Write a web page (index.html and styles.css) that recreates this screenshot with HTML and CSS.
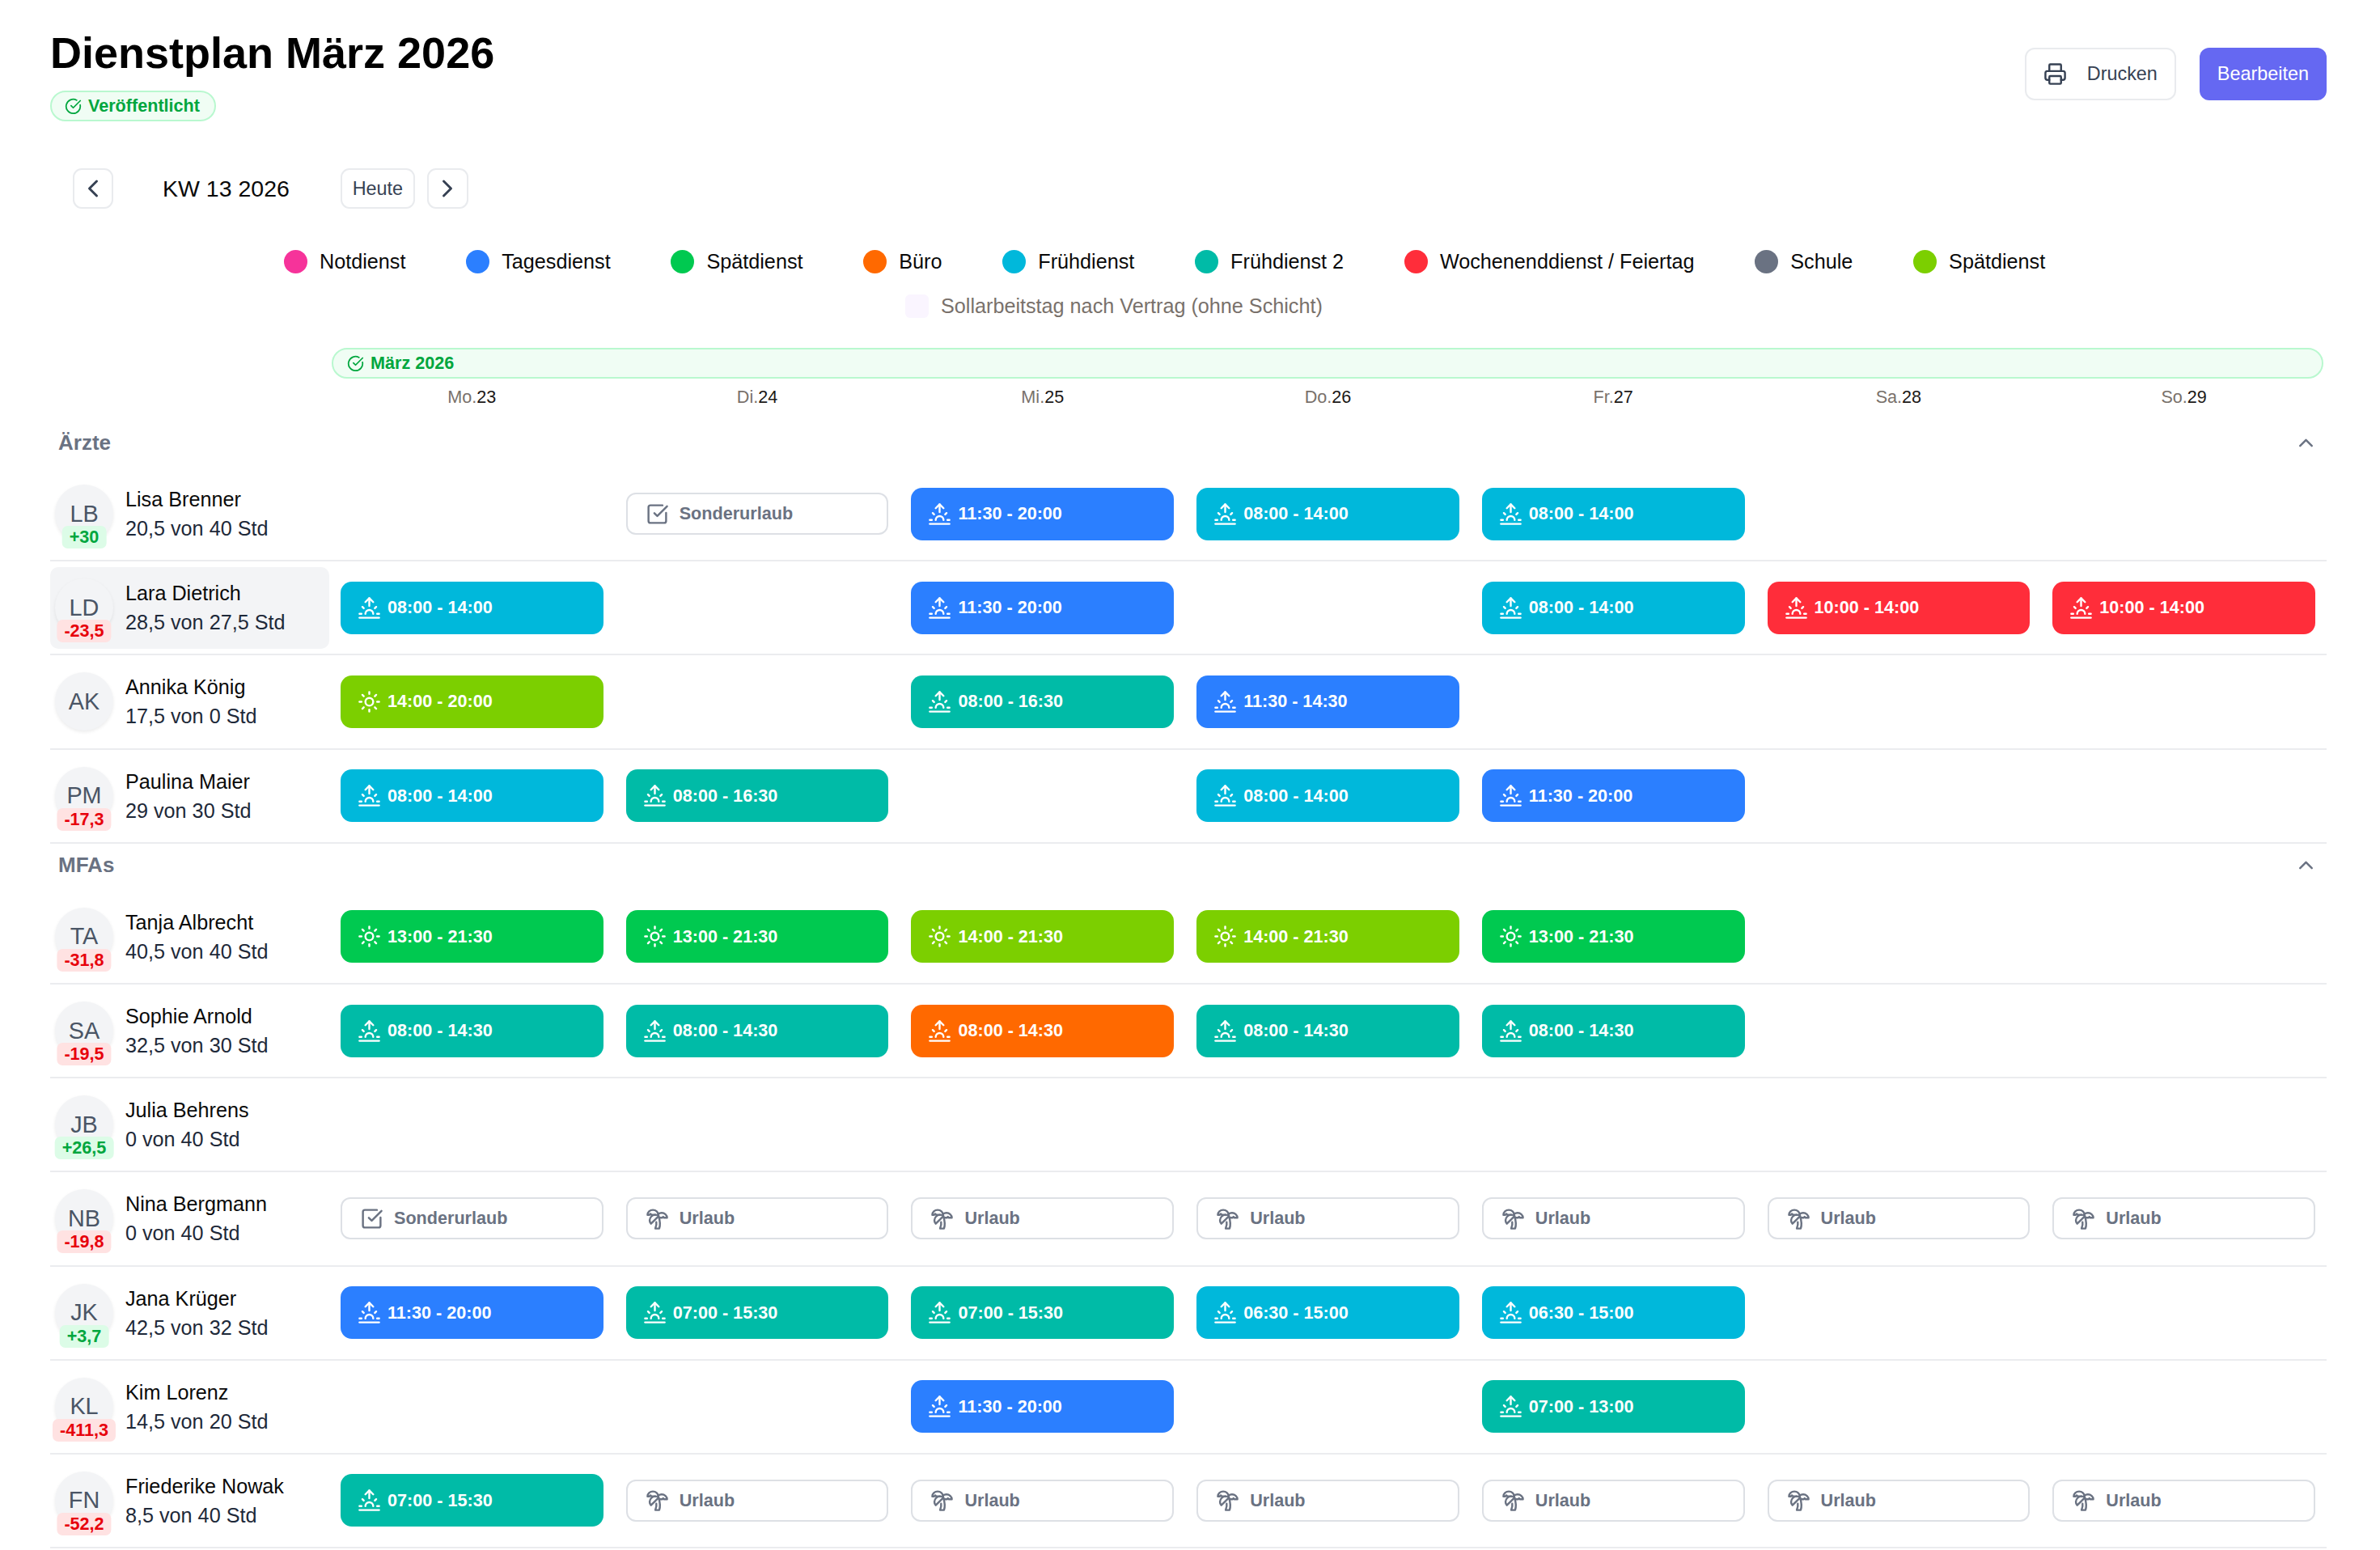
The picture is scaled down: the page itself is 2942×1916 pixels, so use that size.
FILE: index.html
```html
<!DOCTYPE html>
<html lang="de">
<head>
<meta charset="UTF-8">
<title>Dienstplan März 2026</title>
<link rel="stylesheet" href="styles.css">
</head>
<body>
<!-- icon sprite -->
<svg class="sprite" xmlns="http://www.w3.org/2000/svg">
    <symbol id="sunrise" viewBox="0 0 24 24"><path d="M12 2v8"/><path d="m4.93 10.93 1.41 1.41"/><path d="M2 18h2"/><path d="M20 18h2"/><path d="m19.07 10.93-1.41 1.41"/><path d="M22 22H2"/><path d="m8 6 4-4 4 4"/><path d="M16 18a4 4 0 0 0-8 0"/></symbol>
    <symbol id="sun" viewBox="0 0 24 24"><circle cx="12" cy="12" r="4"/><path d="M12 2v2"/><path d="M12 20v2"/><path d="m4.93 4.93 1.41 1.41"/><path d="m17.66 17.66 1.41 1.41"/><path d="M2 12h2"/><path d="M20 12h2"/><path d="m6.34 17.66-1.41 1.41"/><path d="m19.07 4.93-1.41 1.41"/></symbol>
    <symbol id="square-check" viewBox="0 0 24 24"><path d="M21 10.656V19a2 2 0 0 1-2 2H5a2 2 0 0 1-2-2V5a2 2 0 0 1 2-2h12.344"/><path d="m9 11 3 3L22 4"/></symbol>
    <symbol id="palm" viewBox="0 0 24 24"><path d="M13 8c0-2.76-2.46-5-5.5-5S2 5.24 2 8h2l1-1 1 1h4"/><path d="M13 7.14A5.82 5.82 0 0 1 16.5 6c3.04 0 5.5 2.24 5.5 5h-3l-1-1-1 1h-3"/><path d="M5.89 9.71c-2.15 2.15-2.3 5.47-.35 7.43l4.24-4.25.7-.7.71-.71 2.12-2.12c-1.95-1.96-5.27-1.8-7.42.35"/><path d="M11 15.5c.5 2.5-.17 4.5-1 6.5h4c2-5.5-.5-12-1-14"/></symbol>
    <symbol id="printer" viewBox="0 0 24 24"><path d="M6 18H4a2 2 0 0 1-2-2v-5a2 2 0 0 1 2-2h16a2 2 0 0 1 2 2v5a2 2 0 0 1-2 2h-2"/><path d="M6 9V3a1 1 0 0 1 1-1h10a1 1 0 0 1 1 1v6"/><rect x="6" y="14" width="12" height="8" rx="1"/></symbol>
    <symbol id="circle-check" viewBox="0 0 24 24"><path d="M21.801 10A10 10 0 1 1 17 3.335"/><path d="m9 11 3 3L22 4"/></symbol>
    <symbol id="chevron-left" viewBox="0 0 24 24"><path d="m15 18-6-6 6-6"/></symbol>
    <symbol id="chevron-right" viewBox="0 0 24 24"><path d="m9 18 6-6-6-6"/></symbol>
    <symbol id="chevron-up" viewBox="0 0 24 24"><path d="m18 15-6-6-6 6"/></symbol>
</svg>

<header class="page-header">
    <div>
        <h1>Dienstplan März 2026</h1>
        <span class="status-badge"><svg class="ico-check"><use href="#circle-check"/></svg>Veröffentlicht</span>
    </div>
    <div class="header-actions">
        <button class="btn btn-print"><svg class="ico-print"><use href="#printer"/></svg>Drucken</button>
        <button class="btn btn-primary">Bearbeiten</button>
    </div>
</header>

<nav class="week-nav">
    <button class="nav-btn"><svg class="ico-nav"><use href="#chevron-left"/></svg></button>
    <span class="week-label">KW 13 2026</span>
    <button class="nav-btn nav-today">Heute</button>
    <button class="nav-btn nav-next"><svg class="ico-nav"><use href="#chevron-right"/></svg></button>
</nav>

<div class="legend">
    <div class="legend-row">
        <span class="legend-item"><i class="dot pink"></i>Notdienst</span>
        <span class="legend-item"><i class="dot blue"></i>Tagesdienst</span>
        <span class="legend-item"><i class="dot green"></i>Spätdienst</span>
        <span class="legend-item"><i class="dot orange"></i>Büro</span>
        <span class="legend-item"><i class="dot cyan"></i>Frühdienst</span>
        <span class="legend-item"><i class="dot teal"></i>Frühdienst 2</span>
        <span class="legend-item"><i class="dot red"></i>Wochenenddienst / Feiertag</span>
        <span class="legend-item"><i class="dot gray"></i>Schule</span>
        <span class="legend-item"><i class="dot lime"></i>Spätdienst</span>
    </div>
    <div class="legend-row legend-row-note">
        <span class="legend-item legend-note"><i class="swatch"></i>Sollarbeitstag nach Vertrag (ohne Schicht)</span>
    </div>
</div>

<div class="month-bar"><svg class="ico-check"><use href="#circle-check"/></svg>März 2026</div>

<div class="day-head">
    <div></div>
    <div class="day"><span>Mo.</span>23</div>
    <div class="day"><span>Di.</span>24</div>
    <div class="day"><span>Mi.</span>25</div>
    <div class="day"><span>Do.</span>26</div>
    <div class="day"><span>Fr.</span>27</div>
    <div class="day"><span>Sa.</span>28</div>
    <div class="day"><span>So.</span>29</div>
</div>

<div class="group-head"><span>Ärzte</span><svg class="ico-group"><use href="#chevron-up"/></svg></div>

<div class="row">
    <div class="person">
        <div class="avatar">LB<span class="saldo plus">+30</span></div>
        <div class="person-text"><div class="name">Lisa Brenner</div><div>20,5 von 40 Std</div></div>
    </div>
    <div class="cell"></div>
    <div class="cell"><div class="absence"><svg><use href="#square-check"/></svg>Sonderurlaub</div></div>
    <div class="cell"><div class="shift blue"><svg><use href="#sunrise"/></svg>11:30 - 20:00</div></div>
    <div class="cell"><div class="shift cyan"><svg><use href="#sunrise"/></svg>08:00 - 14:00</div></div>
    <div class="cell"><div class="shift cyan"><svg><use href="#sunrise"/></svg>08:00 - 14:00</div></div>
    <div class="cell"></div>
    <div class="cell"></div>
</div>

<div class="row">
    <div class="person active">
        <div class="avatar">LD<span class="saldo minus">-23,5</span></div>
        <div class="person-text"><div class="name">Lara Dietrich</div><div>28,5 von 27,5 Std</div></div>
    </div>
    <div class="cell"><div class="shift cyan"><svg><use href="#sunrise"/></svg>08:00 - 14:00</div></div>
    <div class="cell"></div>
    <div class="cell"><div class="shift blue"><svg><use href="#sunrise"/></svg>11:30 - 20:00</div></div>
    <div class="cell"></div>
    <div class="cell"><div class="shift cyan"><svg><use href="#sunrise"/></svg>08:00 - 14:00</div></div>
    <div class="cell"><div class="shift red"><svg><use href="#sunrise"/></svg>10:00 - 14:00</div></div>
    <div class="cell"><div class="shift red"><svg><use href="#sunrise"/></svg>10:00 - 14:00</div></div>
</div>

<div class="row">
    <div class="person">
        <div class="avatar">AK</div>
        <div class="person-text"><div class="name">Annika König</div><div>17,5 von 0 Std</div></div>
    </div>
    <div class="cell"><div class="shift lime"><svg><use href="#sun"/></svg>14:00 - 20:00</div></div>
    <div class="cell"></div>
    <div class="cell"><div class="shift teal"><svg><use href="#sunrise"/></svg>08:00 - 16:30</div></div>
    <div class="cell"><div class="shift blue"><svg><use href="#sunrise"/></svg>11:30 - 14:30</div></div>
    <div class="cell"></div>
    <div class="cell"></div>
    <div class="cell"></div>
</div>

<div class="row">
    <div class="person">
        <div class="avatar">PM<span class="saldo minus">-17,3</span></div>
        <div class="person-text"><div class="name">Paulina Maier</div><div>29 von 30 Std</div></div>
    </div>
    <div class="cell"><div class="shift cyan"><svg><use href="#sunrise"/></svg>08:00 - 14:00</div></div>
    <div class="cell"><div class="shift teal"><svg><use href="#sunrise"/></svg>08:00 - 16:30</div></div>
    <div class="cell"></div>
    <div class="cell"><div class="shift cyan"><svg><use href="#sunrise"/></svg>08:00 - 14:00</div></div>
    <div class="cell"><div class="shift blue"><svg><use href="#sunrise"/></svg>11:30 - 20:00</div></div>
    <div class="cell"></div>
    <div class="cell"></div>
</div>

<div class="group-head"><span>MFAs</span><svg class="ico-group"><use href="#chevron-up"/></svg></div>

<div class="row">
    <div class="person">
        <div class="avatar">TA<span class="saldo minus">-31,8</span></div>
        <div class="person-text"><div class="name">Tanja Albrecht</div><div>40,5 von 40 Std</div></div>
    </div>
    <div class="cell"><div class="shift green"><svg><use href="#sun"/></svg>13:00 - 21:30</div></div>
    <div class="cell"><div class="shift green"><svg><use href="#sun"/></svg>13:00 - 21:30</div></div>
    <div class="cell"><div class="shift lime"><svg><use href="#sun"/></svg>14:00 - 21:30</div></div>
    <div class="cell"><div class="shift lime"><svg><use href="#sun"/></svg>14:00 - 21:30</div></div>
    <div class="cell"><div class="shift green"><svg><use href="#sun"/></svg>13:00 - 21:30</div></div>
    <div class="cell"></div>
    <div class="cell"></div>
</div>

<div class="row">
    <div class="person">
        <div class="avatar">SA<span class="saldo minus">-19,5</span></div>
        <div class="person-text"><div class="name">Sophie Arnold</div><div>32,5 von 30 Std</div></div>
    </div>
    <div class="cell"><div class="shift teal"><svg><use href="#sunrise"/></svg>08:00 - 14:30</div></div>
    <div class="cell"><div class="shift teal"><svg><use href="#sunrise"/></svg>08:00 - 14:30</div></div>
    <div class="cell"><div class="shift orange"><svg><use href="#sunrise"/></svg>08:00 - 14:30</div></div>
    <div class="cell"><div class="shift teal"><svg><use href="#sunrise"/></svg>08:00 - 14:30</div></div>
    <div class="cell"><div class="shift teal"><svg><use href="#sunrise"/></svg>08:00 - 14:30</div></div>
    <div class="cell"></div>
    <div class="cell"></div>
</div>

<div class="row">
    <div class="person">
        <div class="avatar">JB<span class="saldo plus">+26,5</span></div>
        <div class="person-text"><div class="name">Julia Behrens</div><div>0 von 40 Std</div></div>
    </div>
    <div class="cell"></div>
    <div class="cell"></div>
    <div class="cell"></div>
    <div class="cell"></div>
    <div class="cell"></div>
    <div class="cell"></div>
    <div class="cell"></div>
</div>

<div class="row">
    <div class="person">
        <div class="avatar">NB<span class="saldo minus">-19,8</span></div>
        <div class="person-text"><div class="name">Nina Bergmann</div><div>0 von 40 Std</div></div>
    </div>
    <div class="cell"><div class="absence"><svg><use href="#square-check"/></svg>Sonderurlaub</div></div>
    <div class="cell"><div class="absence"><svg><use href="#palm"/></svg>Urlaub</div></div>
    <div class="cell"><div class="absence"><svg><use href="#palm"/></svg>Urlaub</div></div>
    <div class="cell"><div class="absence"><svg><use href="#palm"/></svg>Urlaub</div></div>
    <div class="cell"><div class="absence"><svg><use href="#palm"/></svg>Urlaub</div></div>
    <div class="cell"><div class="absence"><svg><use href="#palm"/></svg>Urlaub</div></div>
    <div class="cell"><div class="absence"><svg><use href="#palm"/></svg>Urlaub</div></div>
</div>

<div class="row">
    <div class="person">
        <div class="avatar">JK<span class="saldo plus">+3,7</span></div>
        <div class="person-text"><div class="name">Jana Krüger</div><div>42,5 von 32 Std</div></div>
    </div>
    <div class="cell"><div class="shift blue"><svg><use href="#sunrise"/></svg>11:30 - 20:00</div></div>
    <div class="cell"><div class="shift teal"><svg><use href="#sunrise"/></svg>07:00 - 15:30</div></div>
    <div class="cell"><div class="shift teal"><svg><use href="#sunrise"/></svg>07:00 - 15:30</div></div>
    <div class="cell"><div class="shift cyan"><svg><use href="#sunrise"/></svg>06:30 - 15:00</div></div>
    <div class="cell"><div class="shift cyan"><svg><use href="#sunrise"/></svg>06:30 - 15:00</div></div>
    <div class="cell"></div>
    <div class="cell"></div>
</div>

<div class="row">
    <div class="person">
        <div class="avatar">KL<span class="saldo minus">-411,3</span></div>
        <div class="person-text"><div class="name">Kim Lorenz</div><div>14,5 von 20 Std</div></div>
    </div>
    <div class="cell"></div>
    <div class="cell"></div>
    <div class="cell"><div class="shift blue"><svg><use href="#sunrise"/></svg>11:30 - 20:00</div></div>
    <div class="cell"></div>
    <div class="cell"><div class="shift teal"><svg><use href="#sunrise"/></svg>07:00 - 13:00</div></div>
    <div class="cell"></div>
    <div class="cell"></div>
</div>

<div class="row">
    <div class="person">
        <div class="avatar">FN<span class="saldo minus">-52,2</span></div>
        <div class="person-text"><div class="name">Friederike Nowak</div><div>8,5 von 40 Std</div></div>
    </div>
    <div class="cell"><div class="shift teal"><svg><use href="#sunrise"/></svg>07:00 - 15:30</div></div>
    <div class="cell"><div class="absence"><svg><use href="#palm"/></svg>Urlaub</div></div>
    <div class="cell"><div class="absence"><svg><use href="#palm"/></svg>Urlaub</div></div>
    <div class="cell"><div class="absence"><svg><use href="#palm"/></svg>Urlaub</div></div>
    <div class="cell"><div class="absence"><svg><use href="#palm"/></svg>Urlaub</div></div>
    <div class="cell"><div class="absence"><svg><use href="#palm"/></svg>Urlaub</div></div>
    <div class="cell"><div class="absence"><svg><use href="#palm"/></svg>Urlaub</div></div>
</div>
</body>
</html>
```

FILE: styles.css
```css
* {
    box-sizing: border-box;
}

body {
    font-family: "Liberation Sans", Arial, sans-serif;
    background-color: #fff;
    color: #0a0a0a;
    margin: 0;
    padding: 32px 66px 0 62px;
}

svg {
    fill: none;
    stroke: currentColor;
    stroke-width: 2;
    stroke-linecap: round;
    stroke-linejoin: round;
    flex-shrink: 0;
}

.sprite {
    display: none;
}

/* Page header */
.page-header {
    display: flex;
    justify-content: space-between;
    align-items: center;
}

h1 {
    font-size: 54px;
    line-height: 65px;
    font-weight: 700;
    margin: 1px 0 14px;
    color: #000;
}

.status-badge {
    display: inline-flex;
    align-items: center;
    gap: 8px;
    height: 38px;
    padding: 0 18px 0 16px;
    font-size: 21.6px;
    font-weight: 700;
    color: #00a63e;
    background-color: #f0fdf4;
    border: 2px solid #b9f8cf;
    border-radius: 19px;
}

.ico-check {
    width: 21px;
    height: 21px;
}

.header-actions {
    display: flex;
    gap: 29px;
}

.btn {
    display: flex;
    align-items: center;
    height: 65px;
    padding: 0 21px;
    font-family: inherit;
    font-size: 23.4px;
    border-radius: 12px;
}

.btn-print {
    gap: 25px;
    color: #364153;
    background-color: #fff;
    border: 2px solid #e9ebee;
}

.ico-print {
    width: 29px;
    height: 29px;
}

.btn-primary {
    padding: 0 22px;
    color: #fff;
    background-color: #6568f2;
    border: none;
}

/* Week navigation */
.week-nav {
    display: flex;
    align-items: center;
    margin-top: 36px;
    padding: 22px 0 0 28px;
    height: 72px;
}

.nav-btn {
    display: flex;
    align-items: center;
    justify-content: center;
    width: 50px;
    height: 50px;
    padding: 0;
    font-family: inherit;
    font-size: 23.4px;
    color: #364153;
    background-color: #fff;
    border: 2px solid #e9ebee;
    border-radius: 11px;
}

.nav-today {
    width: 92px;
    margin-right: 15px;
}

.nav-next {
    width: 51px;
}

.ico-nav {
    width: 36px;
    height: 36px;
}

.week-label {
    font-size: 28.5px;
    margin: 0 63px 0 61px;
}

/* Legend */
.legend {
    margin-top: 47px;
    display: flex;
    flex-direction: column;
    gap: 19px;
}

.legend-row {
    display: flex;
    height: 36px;
    gap: 74.8px;
    padding-left: 289px;
}

.legend-row-note {
    padding-left: 1057px;
}

.legend-item {
    display: flex;
    align-items: center;
    gap: 15px;
    font-size: 25.2px;
    white-space: nowrap;
}

.legend-note {
    color: #79716b;
}

.dot {
    width: 29px;
    height: 29px;
    border-radius: 50%;
}

.swatch {
    width: 29px;
    height: 29px;
    border-radius: 6px;
    background-color: #faf5ff;
}

.dot.pink { background-color: #f6339a; }
.dot.blue { background-color: #2b7fff; }
.dot.green { background-color: #00c950; }
.dot.orange { background-color: #ff6900; }
.dot.cyan { background-color: #00b8db; }
.dot.teal { background-color: #00bba7; }
.dot.red { background-color: #ff2d3a; }
.dot.gray { background-color: #6a7282; }
.dot.lime { background-color: #7ccf00; }

/* Month bar and day labels */
.month-bar {
    display: flex;
    align-items: center;
    gap: 8px;
    height: 38px;
    margin: 34px 4px 0 348px;
    padding-left: 17px;
    font-size: 21.6px;
    font-weight: 700;
    color: #00a63e;
    background-color: #f0fdf4;
    border: 2px solid #b9f8cf;
    border-radius: 19px;
}

.day-head,
.row {
    display: grid;
    grid-template-columns: 345px repeat(7, 1fr);
}

.day-head {
    margin-top: 7px;
    height: 32px;
    margin-bottom: 13px;
}

.day {
    text-align: center;
    font-size: 21.6px;
    line-height: 32px;
    color: #1c1917;
}

.day span {
    color: #79716b;
}

/* Employee groups */
.group-head {
    display: flex;
    justify-content: space-between;
    align-items: center;
    height: 58px;
    padding: 0 11px 4px 10px;
    font-size: 26px;
    font-weight: 700;
    color: #6a7282;
}

.ico-group {
    width: 29px;
    height: 29px;
}

.row {
    height: 116.2px;
    border-bottom: 2px solid #ebecef;
    align-items: center;
}

.person {
    display: flex;
    align-items: center;
    gap: 15px;
    height: 101px;
    padding-left: 6px;
    border-radius: 10px;
}

.person.active {
    background-color: #f3f4f6;
}

.person-text {
    font-size: 25.2px;
    line-height: 36px;
    color: #1e2939;
}

.person-text .name {
    color: #0a0a0a;
}

.avatar {
    position: relative;
    display: flex;
    align-items: center;
    justify-content: center;
    width: 72px;
    height: 72px;
    font-size: 28.8px;
    color: #4a5565;
    background-color: #f3f4f6;
    border-radius: 50%;
    box-shadow: 0 2px 4px rgba(0, 0, 0, 0.08);
}

.saldo {
    position: absolute;
    bottom: -7px;
    left: 50%;
    transform: translateX(-50%);
    height: 28px;
    padding: 0 9px;
    font-size: 21.6px;
    font-weight: 700;
    line-height: 28px;
    white-space: nowrap;
    border-radius: 7px;
}

.saldo.plus {
    color: #00a63e;
    background-color: #dcfce7;
}

.saldo.minus {
    color: #e7000b;
    background-color: #ffe2e2;
}

/* Shift cards */
.cell {
    padding: 0 14px;
}

.shift {
    display: flex;
    align-items: center;
    gap: 8px;
    height: 65px;
    padding-left: 21px;
    font-size: 21.6px;
    font-weight: 700;
    color: #fff;
    border-radius: 14px;
}

.shift svg {
    width: 29px;
    height: 29px;
}

.shift.blue { background-color: #2b7fff; }
.shift.green { background-color: #00c950; }
.shift.orange { background-color: #ff6900; }
.shift.cyan { background-color: #00b8db; }
.shift.teal { background-color: #00bba7; }
.shift.red { background-color: #ff2d3a; }
.shift.lime { background-color: #7ccf00; }

.absence {
    display: flex;
    align-items: center;
    gap: 13px;
    height: 52px;
    padding-left: 22px;
    font-size: 21.6px;
    font-weight: 700;
    color: #6a7282;
    background-color: #fff;
    border: 2px solid #dde0e5;
    border-radius: 12px;
}

.absence svg {
    width: 29px;
    height: 29px;
}
```
